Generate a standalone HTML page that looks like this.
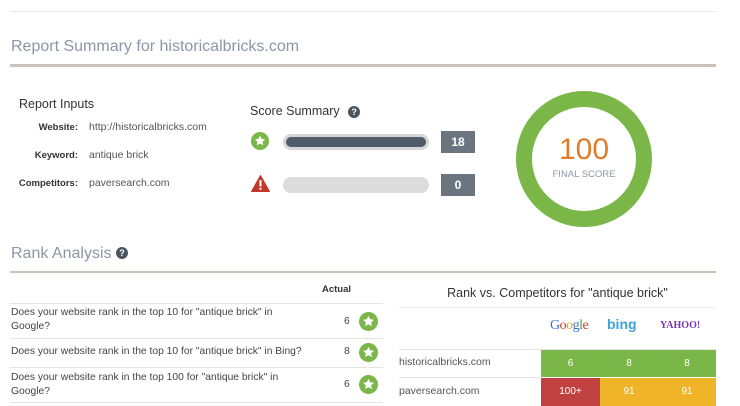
<!DOCTYPE html>
<html><head><meta charset="utf-8"><style>
*{margin:0;padding:0;box-sizing:border-box}
body{width:740px;height:406px;overflow:hidden;background:#fff;font-family:"Liberation Sans",sans-serif;color:#444;position:relative}
.a{position:absolute;white-space:nowrap}
.h{color:#8a97a6;font-size:16px}
.lab{font-size:9.5px;font-weight:bold;color:#333;text-align:right;width:78px;left:0}
.val{font-size:10.5px;color:#555;left:89px}
.q{display:inline-block;width:12px;height:12px;border-radius:50%;background:#4a5560;color:#fff;font-size:9px;font-weight:bold;text-align:center;line-height:12px}
.row{font-size:10.3px;color:#444;line-height:14px}
.hl{position:absolute;height:1px;background:#e4e4e4}
.cell{position:absolute;color:#fff;font-size:10px;text-align:center;line-height:28px}
</style></head><body>
<div class="hl" style="left:10px;top:11px;width:706px;background:#e8eaec"></div>
<div class="a h" style="left:11px;top:38px">Report Summary for historicalbricks.com</div>
<div class="a" style="left:10px;top:64px;width:706px;height:3px;background:#cbc3b7"></div>

<div class="a" style="left:19px;top:97px;font-size:12.5px;color:#333">Report Inputs</div>
<div class="a lab" style="top:122px">Website:</div><div class="a val" style="top:121px">http://historicalbricks.com</div>
<div class="a lab" style="top:150px">Keyword:</div><div class="a val" style="top:149px">antique brick</div>
<div class="a lab" style="top:178px">Competitors:</div><div class="a val" style="top:177px">paversearch.com</div>

<div class="a" style="left:250px;top:104px;font-size:12.5px;color:#333">Score Summary <span class="q" style="margin-left:5px">?</span></div>
<svg class="a" style="left:251px;top:132px" width="18" height="18" viewBox="0 0 18 18"><circle cx="9" cy="9" r="9" fill="#7ab648"/><path d="M9 3.5l1.6 3.4 3.6.4-2.7 2.5.8 3.6L9 11.6l-3.3 1.8.8-3.6-2.7-2.5 3.6-.4z" fill="#fff"/></svg>
<div class="a" style="left:283px;top:134px;width:146px;height:16px;border-radius:8px;background:#d6d6d6;padding:3px"><div style="height:10px;border-radius:5px;background:#4f5d6a"></div></div>
<div class="a" style="left:441px;top:131px;width:34px;height:22px;background:#6b7580;color:#fff;font-size:12px;font-weight:bold;text-align:center;line-height:22px">18</div>
<svg class="a" style="left:251px;top:175px" width="19" height="17" viewBox="0 0 19 17"><path d="M9.5 0.5L18.5 16.5H0.5z" fill="#c0392b" stroke="#c0392b" stroke-linejoin="round"/><rect x="8.5" y="5" width="2" height="6.5" fill="#fff"/><rect x="8.5" y="12.8" width="2" height="2" fill="#fff"/></svg>
<div class="a" style="left:283px;top:177px;width:146px;height:16px;border-radius:8px;background:#dcdcdc"></div>
<div class="a" style="left:441px;top:174px;width:34px;height:22px;background:#6b7580;color:#fff;font-size:12px;font-weight:bold;text-align:center;line-height:22px">0</div>

<div class="a" style="left:516px;top:91px;width:136px;height:136px;border-radius:50%;border:16px solid #7ab648"></div>
<div class="a" style="left:516px;top:133px;width:136px;text-align:center;font-size:30px;color:#e07b2a">100</div>
<div class="a" style="left:516px;top:169px;width:136px;text-align:center;font-size:9.5px;color:#8a97a6">FINAL SCORE</div>

<div class="a h" style="left:11px;top:245px">Rank Analysis <span class="q" style="margin-left:0;vertical-align:2px">?</span></div>
<div class="a" style="left:10px;top:271px;width:706px;height:2px;background:#cbc3b7"></div>

<div class="a" style="left:322px;top:284px;font-size:9.5px;font-weight:bold;color:#333">Actual</div>
<div class="hl" style="left:10px;top:303px;width:373px"></div>
<div class="a row" style="left:11px;top:306px">Does your website rank in the top 10 for "antique brick" in<br>Google?</div>
<div class="a row" style="left:344px;top:315px">6</div>
<div class="hl" style="left:10px;top:338px;width:373px"></div>
<div class="a row" style="left:11px;top:345px">Does your website rank in the top 10 for "antique brick" in Bing?</div>
<div class="a row" style="left:344px;top:345px">8</div>
<div class="hl" style="left:10px;top:367px;width:373px"></div>
<div class="a row" style="left:11px;top:371px">Does your website rank in the top 100 for "antique brick" in<br>Google?</div>
<div class="a row" style="left:344px;top:378px">6</div>
<div class="hl" style="left:10px;top:402px;width:373px"></div>
<svg class="a" style="left:359px;top:312px" width="19" height="19" viewBox="0 0 18 18"><circle cx="9" cy="9" r="9" fill="#7ab648"/><path d="M9 3.5l1.6 3.4 3.6.4-2.7 2.5.8 3.6L9 11.6l-3.3 1.8.8-3.6-2.7-2.5 3.6-.4z" fill="#fff"/></svg>
<svg class="a" style="left:359px;top:343px" width="19" height="19" viewBox="0 0 18 18"><circle cx="9" cy="9" r="9" fill="#7ab648"/><path d="M9 3.5l1.6 3.4 3.6.4-2.7 2.5.8 3.6L9 11.6l-3.3 1.8.8-3.6-2.7-2.5 3.6-.4z" fill="#fff"/></svg>
<svg class="a" style="left:359px;top:375px" width="19" height="19" viewBox="0 0 18 18"><circle cx="9" cy="9" r="9" fill="#7ab648"/><path d="M9 3.5l1.6 3.4 3.6.4-2.7 2.5.8 3.6L9 11.6l-3.3 1.8.8-3.6-2.7-2.5 3.6-.4z" fill="#fff"/></svg>

<div class="a" style="left:399px;top:286px;width:317px;text-align:center;font-size:12.5px;color:#333">Rank vs. Competitors for "antique brick"</div>
<div class="hl" style="left:399px;top:307px;width:317px;background:#eee"></div>
<div class="a" style="left:550px;top:318px;font-size:14px;font-family:'Liberation Serif',serif;letter-spacing:-0.5px"><span style="color:#3b6fd3">G</span><span style="color:#d33">o</span><span style="color:#e6a500">o</span><span style="color:#3b6fd3">g</span><span style="color:#3a3">l</span><span style="color:#d33">e</span></div>
<div class="a" style="left:607px;top:316px;font-size:14px;color:#3fa0dc;font-weight:bold">bing</div>
<div class="a" style="left:660px;top:320px;font-size:10px;color:#7a35b5;font-weight:bold;font-family:'Liberation Serif',serif">YAHOO!</div>
<div class="hl" style="left:399px;top:349px;width:317px"></div>
<div class="a" style="left:399px;top:356px;font-size:10.5px;color:#555">historicalbricks.com</div>
<div class="cell" style="left:541px;top:350px;width:59px;height:27px;background:#7ab648">6</div>
<div class="cell" style="left:600px;top:350px;width:58px;height:27px;background:#7ab648">8</div>
<div class="cell" style="left:658px;top:350px;width:58px;height:27px;background:#7ab648">8</div>
<div class="hl" style="left:399px;top:377px;width:142px"></div>
<div class="a" style="left:399px;top:385px;font-size:10.5px;color:#555">paversearch.com</div>
<div class="cell" style="left:541px;top:378px;width:59px;height:28px;background:#c0413f">100+</div>
<div class="cell" style="left:600px;top:378px;width:58px;height:28px;background:#f0b429">91</div>
<div class="cell" style="left:658px;top:378px;width:58px;height:28px;background:#f0b429">91</div>
</body></html>
